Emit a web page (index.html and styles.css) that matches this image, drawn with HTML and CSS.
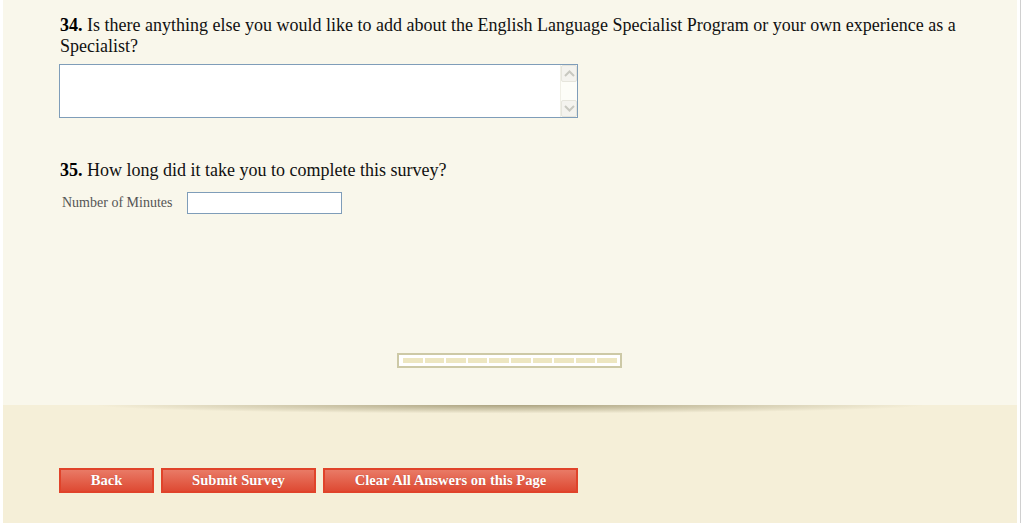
FILE: index.html
```html
<!DOCTYPE html>
<html>
<head>
	<meta charset="utf-8">
	<title>Survey</title>
	<link rel="stylesheet" href="styles.css">
</head>
<body>
<div id="page">
	<div id="questions">
		<div class="question">
			<p class="qtext"><b>34.</b> Is there anything else you would like to add about the English Language Specialist Program or your own experience as a Specialist?</p>
			<div class="textbox">
				<textarea name="q34"></textarea>
				<div class="scroll">
					<div class="scroll_btn">
						<svg width="11" height="7" viewBox="0 0 11 7"><path d="M1 6 L5.5 1.5 L10 6" fill="none" stroke="#c8c8c0" stroke-width="2"/></svg>
					</div>
					<div class="scroll_track"></div>
					<div class="scroll_btn">
						<svg width="11" height="7" viewBox="0 0 11 7"><path d="M1 1 L5.5 5.5 L10 1" fill="none" stroke="#c8c8c0" stroke-width="2"/></svg>
					</div>
				</div>
			</div>
		</div>
		<div class="question q35">
			<p class="qtext"><b>35.</b> How long did it take you to complete this survey?</p>
			<div class="field">
				<span class="field_name">Number of Minutes</span>
				<input type="text" name="q35">
			</div>
		</div>
		<div class="progress">
			<span></span><span></span><span></span><span></span><span></span>
			<span></span><span></span><span></span><span></span><span></span>
		</div>
	</div>
	<div id="footer">
		<div class="shadow"></div>
		<div class="buttons">
			<button class="btn btn_back">Back</button>
			<button class="btn btn_submit">Submit Survey</button>
			<button class="btn btn_clear">Clear All Answers on this Page</button>
		</div>
	</div>
</div>
</body>
</html>
```

FILE: styles.css
```css
body {
	margin: 0;
	background: #fff;
	font-family: "Liberation Serif", "Times New Roman", serif;
	overflow: hidden;
}
#page {
	width: 1014px;
	margin-left: 3px;
	height: 523px;
	display: flex;
	flex-direction: column;
	border-right: 3px solid #fff;
	box-shadow: 4px 0 0 #d0d0d0;
}
#questions {
	background: #f9f7eb;
	height: 405px;
	box-sizing: border-box;
	padding: 15px 0 0 57px;
}
.qtext {
	margin: 0;
	font-size: 18px;
	line-height: 21px;
	color: #111;
	width: 930px;
}
.qtext b {
	color: #000;
}
.textbox {
	display: flex;
	width: 519px;
	height: 54px;
	box-sizing: border-box;
	margin: 7px 0 0 -1px;
	border: 1px solid #7f9db9;
	background: #fff;
}
.textbox textarea {
	flex: 1;
	border: none;
	resize: none;
	outline: none;
	margin: 0;
	padding: 2px;
	overflow: hidden;
}
.scroll {
	width: 16px;
	display: flex;
	flex-direction: column;
	background: #fdfdf8;
	border-left: 1px solid #f0efe6;
}
.scroll_btn {
	height: 17px;
	box-sizing: border-box;
	border: 1px solid #e6e5dc;
	border-radius: 2px;
	background: #f4f3ee;
	display: flex;
	align-items: center;
	justify-content: center;
}
.scroll_track {
	flex: 1;
}
.q35 {
	margin-top: 42px;
}
.field {
	display: flex;
	align-items: center;
	margin-top: 11px;
}
.field_name {
	font-size: 14px;
	color: #555;
	margin-left: 2px;
	width: 125px;
}
.field input {
	width: 155px;
	height: 22px;
	box-sizing: border-box;
	border: 1px solid #7f9db9;
	padding: 2px;
	margin: 0;
}
.progress {
	display: flex;
	gap: 2px;
	width: 225px;
	height: 15px;
	box-sizing: border-box;
	margin: 139px 0 0 337px;
	padding: 3px 3px 3px 4px;
	border: 2px solid #cdc9a6;
	background: #fff;
}
.progress span {
	flex: 1;
	background: #ede6c1;
}
#footer {
	flex: 1;
	background: #f5efd8;
}
.shadow {
	height: 9px;
	margin: 0 70px;
	background: radial-gradient(ellipse 50% 100% at 50% 0, rgba(140, 130, 90, 0.7), rgba(150, 140, 100, 0) 95%);
}
.buttons {
	display: flex;
	gap: 7px;
	margin: 54px 0 0 56px;
}
.btn {
	height: 25px;
	box-sizing: border-box;
	border: 2px solid #e0432a;
	background: linear-gradient(#e97a66, #de4a33);
	color: #fff;
	font-family: "Liberation Serif", "Times New Roman", serif;
	font-weight: bold;
	font-size: 14.6px;
	padding: 0;
	text-shadow: 0 0 1px rgba(120, 20, 10, 0.4);
}
.btn_back {
	width: 95px;
}
.btn_submit {
	width: 155px;
}
.btn_clear {
	width: 255px;
}
```
